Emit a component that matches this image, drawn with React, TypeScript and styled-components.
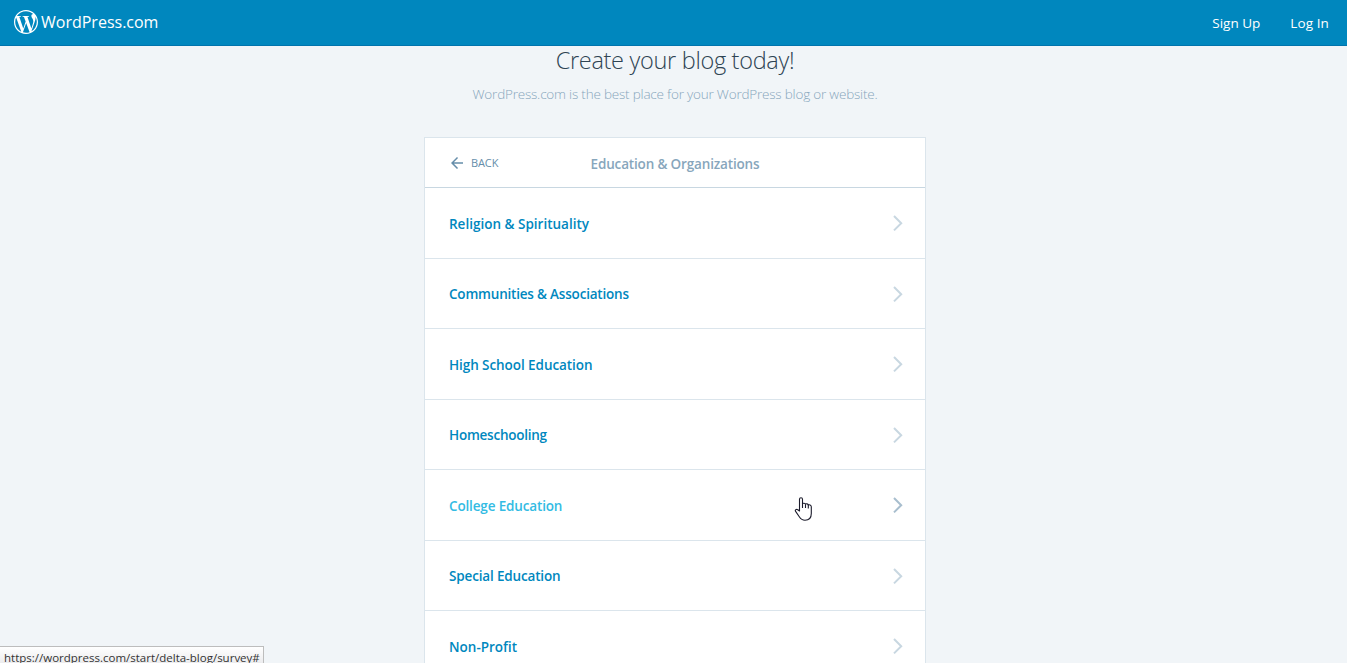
import React from "react";
import styled, { createGlobalStyle } from "styled-components";
import { SiWordpress } from "react-icons/si";

const GlobalStyle = createGlobalStyle`
  * { box-sizing: border-box; }
  html, body { margin: 0; height: 100%; overflow: hidden; }
  body { background: #f1f5f8; font-family: "Open Sans", "Noto Sans", sans-serif; }
`;

const Page = styled.div`
  height: 663px;
  overflow: hidden;
`;

const Masterbar = styled.header`
  height: 46px;
  padding: 0 18px 0 14px;
  display: flex;
  align-items: center;
  justify-content: space-between;
  background: #0087be;
  border-bottom: 1px solid #0074ad;
  color: #fff;
`;

const Brand = styled.div`
  display: flex;
  align-items: center;
  gap: 3px;
  height: 44px;
  padding-bottom: 1px;
  svg { width: 24px; height: 24px; }
`;

const BrandName = styled.span`
  font-size: 16px;
  line-height: 22px;
`;

const Nav = styled.nav`
  display: flex;
  gap: 30px;
`;

const NavLink = styled.a<{ $track: number }>`
  font-size: 13.5px;
  line-height: 20px;
  letter-spacing: ${(p) => p.$track}px;
  margin-top: 1px;
`;

const Main = styled.main`
  display: flex;
  flex-direction: column;
  align-items: center;
  padding-left: 3px;
`;

const Title = styled.h1`
  margin: 0;
  height: 32px;
  font-size: 23.5px;
  line-height: 29px;
  font-weight: 300;
  letter-spacing: -0.3px;
  color: #2e4453;
`;

const Subtitle = styled.p`
  margin: 6px 0 0;
  height: 53px;
  font-size: 13.5px;
  line-height: 20px;
  font-weight: 300;
  letter-spacing: -0.2px;
  color: #87a6bc;
`;

const Card = styled.section`
  width: 502px;
  background: #fff;
  border: 1px solid #dbe5ec;
`;

const CardHeader = styled.div`
  height: 50px;
  padding: 0 23px;
  display: grid;
  grid-template-columns: 1fr auto 1fr;
  align-items: center;
  border-bottom: 1px solid #c8d7e1;
`;

const Back = styled.button`
  display: flex;
  align-items: center;
  gap: 5px;
  padding: 0;
  border: 0;
  background: none;
  color: #668eaa;
  font: 400 11px/18px "Open Sans", "Noto Sans", sans-serif;
  letter-spacing: -0.1px;
  svg { width: 18px; height: 18px; fill: currentColor; }
`;

const CardTitle = styled.h2`
  margin: 2px 0 0;
  font-size: 13.5px;
  line-height: 20px;
  font-weight: 550;
  letter-spacing: -0.16px;
  color: #87a6bc;
`;

const Row = styled.a<{ $height: number; $hover?: boolean }>`
  height: ${(p) => p.$height}px;
  padding: 0 20px 0 24px;
  display: flex;
  align-items: center;
  justify-content: space-between;
  border-bottom: 1px solid #dbe5ec;
  color: ${(p) => (p.$hover ? "#33bbe3" : "#0087be")};
  svg { color: ${(p) => (p.$hover ? "#a8bece" : "#c8d7e1")}; }
`;

const RowLabel = styled.span<{ $track: number }>`
  font-size: 13.5px;
  line-height: 20px;
  font-weight: 550;
  letter-spacing: ${(p) => p.$track}px;
  margin-top: 1px;
`;

const StatusBar = styled.div`
  position: absolute;
  left: 0;
  top: 646px;
  width: 264px;
  height: 17px;
  padding-left: 4px;
  border-top: 1px solid #bdbdbd;
  border-right: 1px solid #bdbdbd;
  background: linear-gradient(#ffffff, #ececee);
  color: #333;
  font-size: 11.5px;
  line-height: 22px;
  white-space: nowrap;
`;

const Pointer = styled.svg`
  position: absolute;
  left: 794px;
  top: 496px;
  width: 20px;
  height: 26px;
`;

const Chevron = () => (
  <svg width="14" height="18" viewBox="0 0 14 18" fill="none" stroke="currentColor" strokeWidth="2">
    <path d="M3 2l7.2 7.2L3 16.4" />
  </svg>
);

const rows = [
  { label: "Religion & Spirituality", height: 71, track: 0 },
  { label: "Communities & Associations", height: 70, track: -0.2 },
  { label: "High School Education", height: 71, track: -0.07 },
  { label: "Homeschooling", height: 70, track: -0.24 },
  { label: "College Education", height: 71, track: -0.15 },
  { label: "Special Education", height: 70, track: -0.16 },
  { label: "Non-Profit", height: 71, track: 0 },
];

const hovered = "College Education";

export default function App() {
  return (
    <Page>
      <GlobalStyle />
      <Masterbar>
        <Brand>
          <SiWordpress />
          <BrandName>WordPress.com</BrandName>
        </Brand>
        <Nav>
          <NavLink $track={0}>Sign Up</NavLink>
          <NavLink $track={0.1}>Log In</NavLink>
        </Nav>
      </Masterbar>
      <Main>
        <Title>Create your blog today!</Title>
        <Subtitle>WordPress.com is the best place for your WordPress blog or website.</Subtitle>
        <Card>
          <CardHeader>
            <Back>
              <svg viewBox="0 0 24 24">
                <path d="M20 11H7.8l5.600-5.600L12 4l-8 8 8 8 1.400-1.400L7.800 13H20v-2z" />
              </svg>
              BACK
            </Back>
            <CardTitle>Education &amp; Organizations</CardTitle>
          </CardHeader>
          {rows.map((r) => (
            <Row key={r.label} $height={r.height} $hover={r.label === hovered}>
              <RowLabel $track={r.track}>{r.label}</RowLabel>
              <Chevron />
            </Row>
          ))}
        </Card>
      </Main>
      <StatusBar>https://wordpress.com/start/delta-blog/survey#</StatusBar>
      <Pointer viewBox="0 0 20 26">
        <path
          d="M5.500 15V3.200c0-1.900 3-1.900 3 0v4.500c.5-.8 2.700-.6 3 .5.600-.7 2.500-.4 2.800.8.800-.6 3 0 3 1.800v6.700c0 4-2.200 6.700-6.300 6.700-3 0-4.400-1.500-5.700-3.500l-3.700-5.300c-1-1.500 1-2.700 2.200-1.600z"
          fill="#fff"
          stroke="#1b1b2b"
          strokeWidth="1.1"
          strokeLinejoin="round"
        />
        <path d="M8.500 7.500v4.500M11.500 8.200v3.800M14.300 9v3.500" stroke="#1b1b2b" strokeWidth="1.1" fill="none" />
      </Pointer>
    </Page>
  );
}
